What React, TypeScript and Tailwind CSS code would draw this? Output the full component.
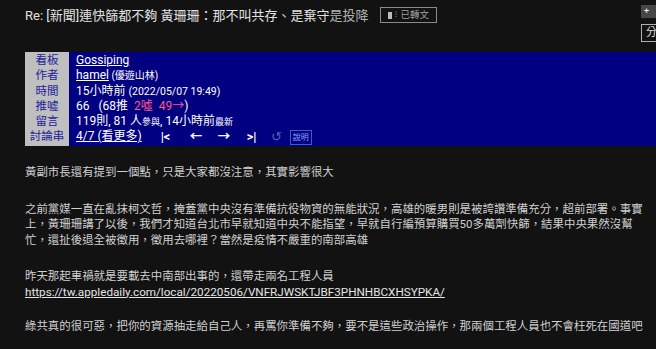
const FONT = 'font-[Roboto,"Noto_Sans_CJK_TC",sans-serif]'

const LABELS = ['看板', '作者', '時間', '推噓', '留言', '討論串']

function NavIcon({ children, dim }: { children: React.ReactNode; dim?: boolean }) {
  return (
    <span className={dim ? 'text-[#5060b0]' : 'text-white font-bold'}>{children}</span>
  )
}

export default function App() {
  return (
    <div className={`w-[656px] h-[349px] overflow-hidden bg-[#121212] ${FONT} relative`}>
      {/* header */}
      <div className="flex items-center h-[30px] pl-[25px] pr-0">
        <div className="text-[13px] leading-none text-[#e2e2e2] whitespace-nowrap">
          Re: [新聞]連快篩都不夠 黃珊珊：那不叫共存、是棄守<span className="text-[#b4b4b4]">是投降</span>
        </div>
        <div className="ml-[12px] flex items-center gap-[3px] border border-[#8a8a8a] h-[16px] w-[57px] px-[7px] text-[9.5px] text-[#a0a0a0]">
          <span className="w-[4px] h-[7px] bg-[#bbb]" />
          <span className="text-[8px] leading-none">⁝</span>
          <span>已轉文</span>
        </div>
      </div>

      {/* right side controls, cut off by the window edge */}
      <div className="absolute right-0 top-[5px] w-[15px] h-[13px] bg-[#474747] text-white text-[9px] leading-[13px] pl-[3px]">+</div>
      <div className="absolute right-[-4px] top-[24px] w-[19px] h-[18px] border border-[#b0b0b0] text-[#ddd] text-[11px] leading-[16px] pl-[4px]">分</div>

      {/* meta table */}
      <div className="mt-[22px] ml-[25px] flex h-[94px]">
        <div className="w-[44px] bg-[#bfbfbf] pt-[1px] flex flex-col items-center">
          {LABELS.map((l) => (
            <div key={l} className="h-[15.3px] leading-[15.3px] text-[11.5px] text-[#22229a]">
              {l}
            </div>
          ))}
        </div>
        <div className="flex-1 bg-[#000080] pl-[7px] pt-[1px] text-white text-[12px]">
          <div className="h-[15.3px] leading-[15.3px]">
            <span className="underline">Gossiping</span>
          </div>
          <div className="h-[15.3px] leading-[15.3px]">
            <span className="underline">hamel</span>
            <span className="text-[10px]"> (優遊山林)</span>
          </div>
          <div className="h-[15.3px] leading-[15.3px]">
            15小時前 <span className="text-[10.5px]">(2022/05/07 19:49)</span>
          </div>
          <div className="h-[15.3px] leading-[15.3px] whitespace-pre">
            66{'   '}(68推{'  '}<span className="text-[#ff5a86]">2噓{'  '}49→</span>)
          </div>
          <div className="h-[15.3px] leading-[15.3px]">
            119則, 81 人<span className="text-[9px]">參與</span>, 14小時前<span className="text-[9px]">最新</span>
          </div>
          <div className="h-[15.3px] leading-[15.3px] flex items-center">
            <span className="underline">4/7 (看更多)</span>
            <div className="flex items-center text-[12.5px] ml-[19px]">
              <span className="w-[29px]"><NavIcon>|&lt;</NavIcon></span>
              <span className="w-[28px]"><NavIcon>←</NavIcon></span>
              <span className="w-[29px]"><NavIcon>→</NavIcon></span>
              <span className="w-[24px]"><NavIcon>&gt;|</NavIcon></span>
              <span className="w-[19px]"><NavIcon dim>↺</NavIcon></span>
            </div>
            <span className="border border-[#3a5ad0] h-[15px] px-[2px] text-[8px] leading-[13px] text-[#8fa4ff]">說明</span>
          </div>
        </div>
      </div>

      {/* body */}
      <div className="pl-[25px] pt-[19px] text-[11.45px] leading-[15.7px] text-[#d0d0d0] whitespace-nowrap">
        <p>黃副市長還有提到一個點，只是大家都沒注意，其實影響很大</p>
        <p className="mt-[21px]">
          之前黨媒一直在亂抹柯文哲，掩蓋黨中央沒有準備抗役物資的無能狀況，高雄的暖男則是被誇讚準備充分，超前部署。事實
          <br />
          上，黃珊珊講了以後，我們才知道台北市早就知道中央不能指望，早就自行編預算購買50多萬劑快篩，結果中央果然沒幫
          <br />
          忙，還扯後退全被徵用，徵用去哪裡？當然是疫情不嚴重的南部高雄
        </p>
        <p className="mt-[20px]">
          昨天那起車禍就是要載去中南部出事的，還帶走兩名工程人員
          <br />
          <span className="underline text-[#e4e4e4] text-[11.7px]">https://tw.appledaily.com/local/20220506/VNFRJWSKTJBF3PHNHBCXHSYPKA/</span>
        </p>
        <p className="mt-[19px]">
          綠共真的很可惡，把你的資源抽走給自己人，再罵你準備不夠，要不是這些政治操作，那兩個工程人員也不會枉死在國道吧
        </p>
      </div>
    </div>
  )
}
